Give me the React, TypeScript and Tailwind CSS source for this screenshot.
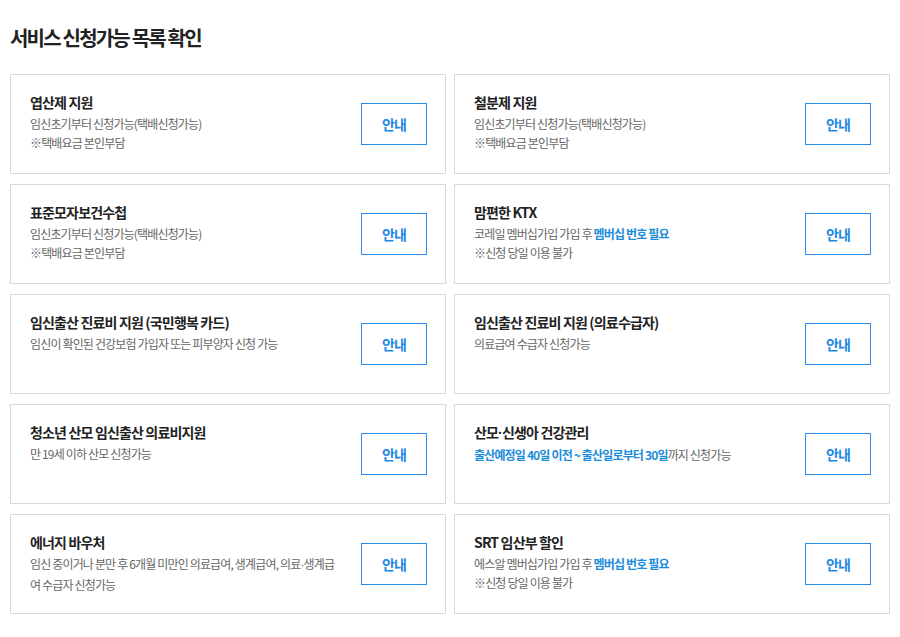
import React from 'react';

type Part = { text: string; blue?: boolean; dot?: boolean };
type Item = { title: Part[]; lines: Part[][] };

const t = (text: string): Part[] => [{ text }];

const items: Item[] = [
  {
    title: t('엽산제 지원'),
    lines: [t('임신초기부터 신청가능(택배신청가능)'), t('※택배요금 본인부담')],
  },
  {
    title: t('철분제 지원'),
    lines: [t('임신초기부터 신청가능(택배신청가능)'), t('※택배요금 본인부담')],
  },
  {
    title: t('표준모자보건수첩'),
    lines: [t('임신초기부터 신청가능(택배신청가능)'), t('※택배요금 본인부담')],
  },
  {
    title: t('맘편한 KTX'),
    lines: [
      [{ text: '코레일 멤버십가입 가입 후 ' }, { text: '멤버십 번호 필요', blue: true }],
      t('※신청 당일 이용 불가'),
    ],
  },
  {
    title: t('임신출산 진료비 지원 (국민행복 카드)'),
    lines: [t('임신이 확인된 건강보험 가입자 또는 피부양자 신청 가능')],
  },
  {
    title: t('임신출산 진료비 지원 (의료수급자)'),
    lines: [t('의료급여 수급자 신청가능')],
  },
  {
    title: t('청소년 산모 임신출산 의료비지원'),
    lines: [t('만 19세 이하 산모 신청가능')],
  },
  {
    title: [{ text: '산모' }, { text: '·', dot: true }, { text: '신생아 건강관리' }],
    lines: [[{ text: '출산예정일 40일 이전 ~ 출산일로부터 30일', blue: true }, { text: '까지 신청가능' }]],
  },
  {
    title: t('에너지 바우처'),
    lines: [
      [
        { text: '임신 중이거나 분만 후 6개월 미만인 의료급여, 생계급여, 의료' },
        { text: '·', dot: true },
        { text: '생계급여 수급자 신청가능' },
      ],
    ],
  },
  {
    title: t('SRT 임산부 할인'),
    lines: [
      [{ text: '에스알 멤버십가입 가입 후 ' }, { text: '멤버십 번호 필요', blue: true }],
      t('※신청 당일 이용 불가'),
    ],
  },
];

function Parts({ parts }: { parts: Part[] }) {
  return (
    <>
      {parts.map((p, j) =>
        p.dot ? (
          <span key={j} className="font-['Liberation_Sans']">
            {p.text}
          </span>
        ) : p.blue ? (
          <span key={j} className="font-bold text-[#1a8cd8]">
            {p.text}
          </span>
        ) : (
          <span key={j}>{p.text}</span>
        )
      )}
    </>
  );
}

function ServiceCard({ item }: { item: Item }) {
  return (
    <div className="h-[100px] border border-[#d9d9d9] bg-white flex items-center pl-[19px] pr-[18px]">
      <div className="flex-1 self-start pt-[17px] pr-[20px]">
        <h3 className="text-[14px] leading-[20px] font-bold text-[#222] tracking-[-0.06em] mb-[2px]">
          <Parts parts={item.title} />
        </h3>
        {item.lines.map((line, i) => (
          <p key={i} className="text-[12px] leading-[19px] text-[#666] tracking-[-0.07em]">
            <Parts parts={line} />
          </p>
        ))}
      </div>
      <button className="w-[66px] h-[42px] shrink-0 border border-[#2b8cf0] text-[#1e88e5] text-[14px] font-bold tracking-[-0.06em] bg-white">
        안내
      </button>
    </div>
  );
}

export default function App() {
  return (
    <div
      className="w-[900px] h-[637px] bg-white px-[10px] pt-[24px]"
      style={{ fontFamily: '"Noto Sans CJK KR", "Noto Sans", sans-serif' }}
    >
      <h2 className="text-[20px] leading-[28px] font-bold text-[#222] tracking-[-0.09em]">서비스 신청가능 목록 확인</h2>
      <div className="grid grid-cols-2 gap-x-[8px] gap-y-[10px] mt-[22px]">
        {items.map((item, i) => (
          <ServiceCard key={i} item={item} />
        ))}
      </div>
    </div>
  );
}
